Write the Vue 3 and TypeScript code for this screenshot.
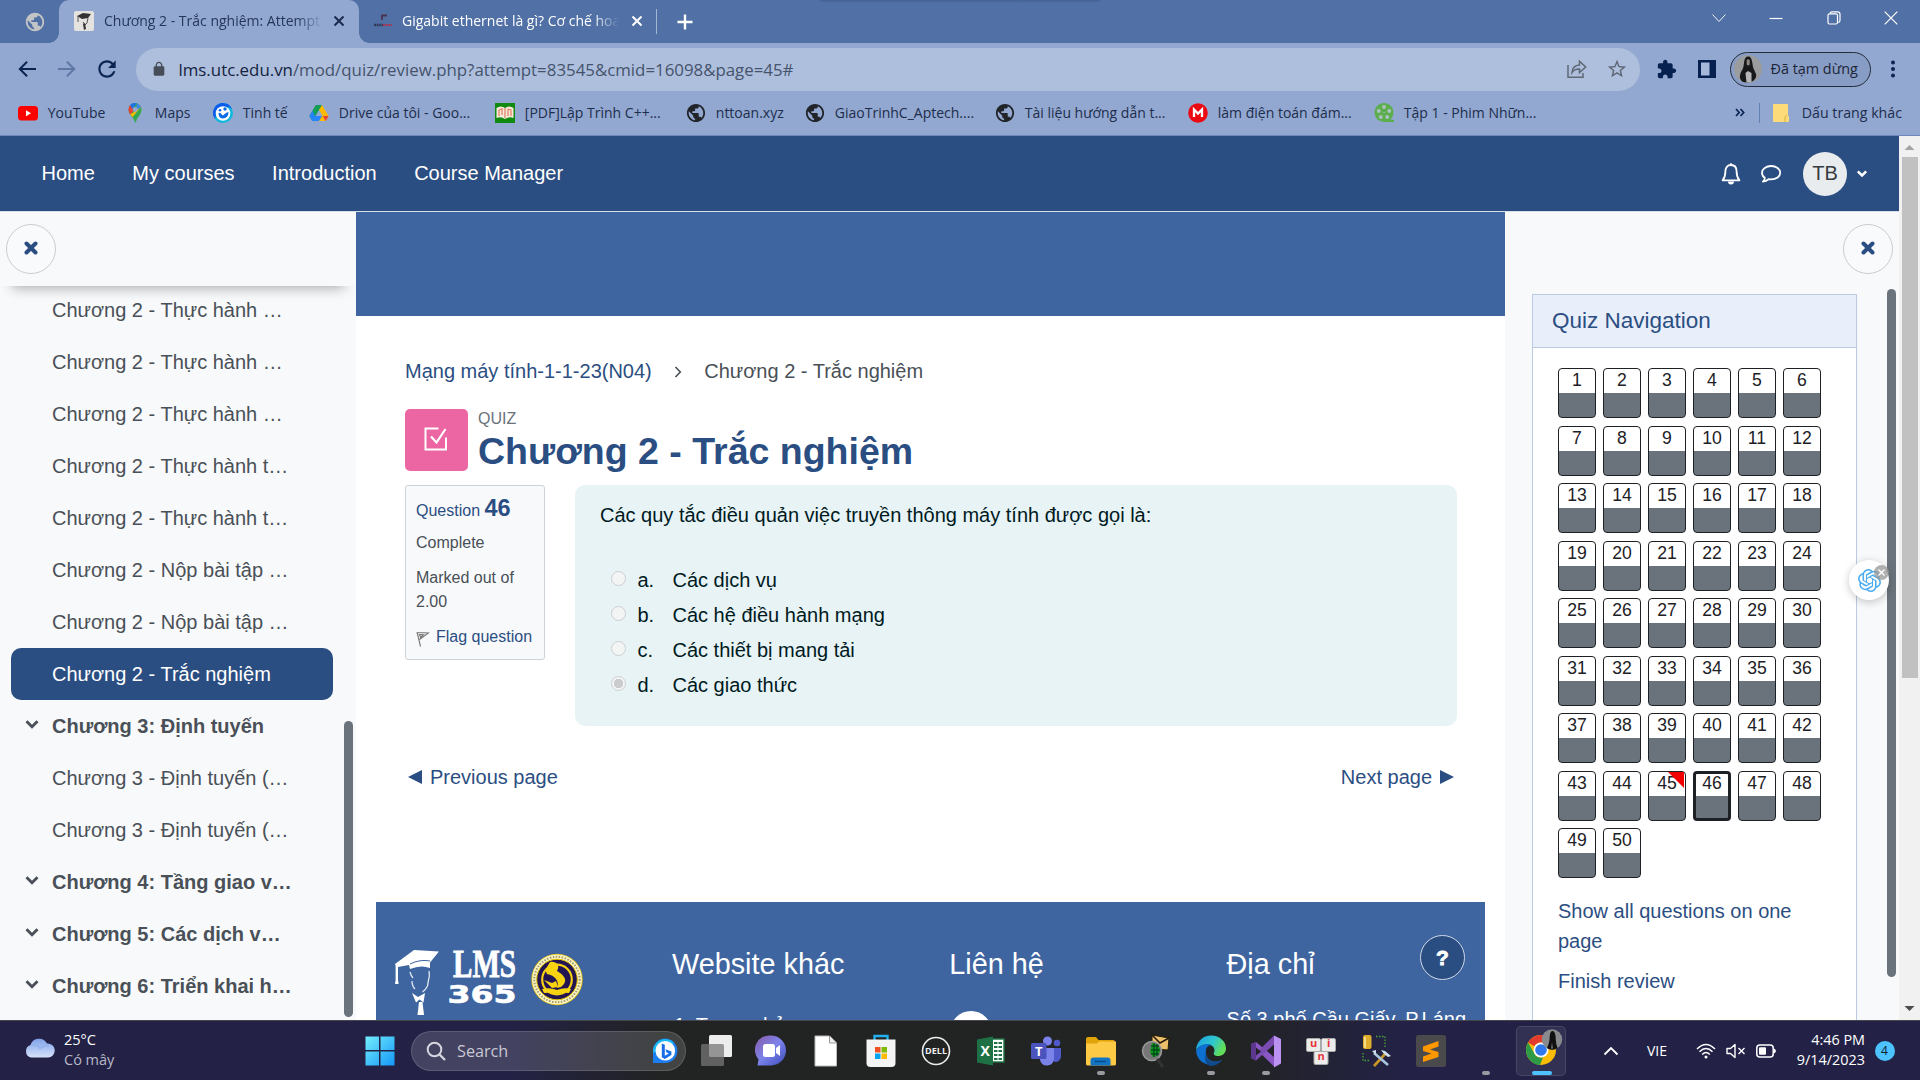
<script setup lang="ts">
interface Bookmark { icon: string; label: string; width: number }
interface CourseRow { label: string; section?: boolean; active?: boolean }

const bookmarks: Bookmark[] = [
  { icon: 'youtube', label: 'YouTube', width: 107 },
  { icon: 'maps', label: 'Maps', width: 88 },
  { icon: 'tinhte', label: 'Tinh tế', width: 96 },
  { icon: 'drive', label: 'Drive của tôi - Goo...', width: 186 },
  { icon: 'book', label: '[PDF]Lập Trình C++...', width: 191 },
  { icon: 'globe', label: 'nttoan.xyz', width: 119 },
  { icon: 'globe', label: 'GiaoTrinhC_Aptech....', width: 190 },
  { icon: 'globe', label: 'Tài liệu hướng dẫn t...', width: 193 },
  { icon: 'mega', label: 'làm điện toán đám...', width: 186 },
  { icon: 'film', label: 'Tập 1 - Phim Nhữn...', width: 180 },
]

const navLinks: string[] = ['Home', 'My courses', 'Introduction', 'Course Manager']

const courseIndex: CourseRow[] = [
  { label: 'Chương 2 - Thực hành …' },
  { label: 'Chương 2 - Thực hành …' },
  { label: 'Chương 2 - Thực hành …' },
  { label: 'Chương 2 - Thực hành t…' },
  { label: 'Chương 2 - Thực hành t…' },
  { label: 'Chương 2 - Nộp bài tập …' },
  { label: 'Chương 2 - Nộp bài tập …' },
  { label: 'Chương 2 - Trắc nghiệm', active: true },
  { label: 'Chương 3: Định tuyến', section: true },
  { label: 'Chương 3 - Định tuyến (…' },
  { label: 'Chương 3 - Định tuyến (…' },
  { label: 'Chương 4: Tầng giao v…', section: true },
  { label: 'Chương 5: Các dịch v…', section: true },
  { label: 'Chương 6: Triển khai h…', section: true },
]

const answers = [
  { key: 'a.', text: 'Các dịch vụ', checked: false },
  { key: 'b.', text: 'Các hệ điều hành mạng', checked: false },
  { key: 'c.', text: 'Các thiết bị mang tải', checked: false },
  { key: 'd.', text: 'Các giao thức', checked: true },
]

const questionCount = 50
const currentQuestion = 46
const flaggedQuestion = 45

const globePath = 'M12 2C6.48 2 2 6.48 2 12s4.48 10 10 10 10-4.48 10-10S17.52 2 12 2zm-1 17.93c-3.95-.49-7-3.85-7-7.93 0-.62.08-1.21.21-1.79L9 15v1c0 1.1.9 2 2 2v1.93zm6.9-2.54c-.26-.81-1-1.39-1.9-1.39h-1v-3c0-.55-.45-1-1-1H8v-2h2c.55 0 1-.45 1-1V7h2c1.1 0 2-.9 2-2v-.41c2.93 1.19 5 4.06 5 7.41 0 2.08-.8 3.97-2.1 5.39z'
</script>

<template>
  <div class="screen">
    <!-- Browser chrome -->
    <div class="tabstrip">
      <div class="pinned"><svg width="22" height="22" viewBox="0 0 24 24" fill="#c3c4c6"><path :d="globePath" /></svg></div>
      <div class="tab active-tab">
        <svg class="favicon" width="20" height="20" viewBox="0 0 20 20"><rect width="20" height="20" rx="2" fill="#e4e3df" /><path d="M3 5l6-3 8 1-3 4-6 1z" fill="#333" /><path d="M4 5v6M14 7l-1 5-2 2-2-3" stroke="#555" fill="none" /><path d="M9 13l2-1 1 6-2 1z" fill="#333" /></svg>
        <span class="tab-title">Chương 2 - Trắc nghiệm: Attempt review</span>
        <svg class="tab-x" width="12" height="12" viewBox="0 0 12 12"><path d="M1.5 1.5l9 9M10.500 1.500l-9 9" stroke="#1c2b4c" stroke-width="2" /></svg>
      </div>
      <div class="tab second-tab">
        <svg class="favicon" width="20" height="20" viewBox="0 0 20 20"><path d="M9 9V4.500h5" fill="none" stroke="#4a3550" stroke-width="1.800" /><path d="M1 14h9" stroke="#2f3a5c" stroke-width="2.500" stroke-dasharray="2 .6" /><path d="M10 14h9" stroke="#a8354d" stroke-width="2.200" stroke-dasharray="2 .7" /></svg>
        <span class="tab-title">Gigabit ethernet là gì? Cơ chế hoạt động</span>
        <svg class="tab-x" width="12" height="12" viewBox="0 0 12 12"><path d="M1.500 1.500l9 9M10.500 1.500l-9 9" stroke="#fff" stroke-width="2" /></svg>
      </div>
      <i class="tab-sep"></i>
      <svg class="plus" width="16" height="16" viewBox="0 0 16 16"><path d="M8 .5v15M.5 8h15" stroke="#fff" stroke-width="2.400" /></svg>
      <div class="window-controls">
        <svg width="14" height="14" viewBox="0 0 14 14" class="thin"><path d="M.5 3.500L7 10.500l6.500-7" /></svg>
        <svg width="14" height="14" viewBox="0 0 14 14"><path d="M.5 7.500h13" /></svg>
        <svg width="14" height="14" viewBox="0 0 14 14"><rect x="1" y="2.800" width="9.500" height="10.200" rx="1.500" /><path d="M3 2.500Q3.300.8 5 .8h5.500q2.500 0 2.500 2.500v6q0 2-1.800 2.200" /></svg>
        <svg width="14" height="14" viewBox="0 0 14 14"><path d="M.7.7l12.600 12.600M13.300.7L.7 13.300" /></svg>
      </div>
      <div class="top-shade"></div>
    </div>

    <div class="toolbar">
      <svg class="nav-ic" width="24" height="24" viewBox="0 0 24 24" fill="#0a2350"><path d="M21 11H7.200l5.600-5.590L11.400 4l-8 8 8 8 1.410-1.410L7.200 13H21v-2z" /></svg>
      <svg class="nav-ic" width="24" height="24" viewBox="0 0 24 24" fill="#5e77a5"><path d="M3 11h13.800l-5.600-5.590L12.600 4l8 8-8 8-1.410-1.410L16.800 13H3v-2z" /></svg>
      <svg class="nav-ic" width="26" height="26" viewBox="0 0 24 24" fill="#0a2350"><path d="M17.650 6.350C16.200 4.900 14.210 4 12 4c-4.420 0-7.990 3.580-7.990 8s3.570 8 7.990 8c3.730 0 6.840-2.550 7.730-6h-2.080c-.82 2.330-3.040 4-5.650 4-3.310 0-6-2.690-6-6s2.690-6 6-6c1.660 0 3.140.69 4.220 1.780L13 11h7V4l-2.350 2.350z" /></svg>
      <div class="omnibox">
        <svg width="16" height="16" viewBox="0 0 24 24" fill="#474d58"><path d="M18 8h-1V6c0-2.760-2.240-5-5-5S7 3.240 7 6v2H6c-1.100 0-2 .9-2 2v10c0 1.100.9 2 2 2h12c1.100 0 2-.9 2-2V10c0-1.100-.9-2-2-2zM9 8V6c0-1.660 1.340-3 3-3s3 1.340 3 3v2z" /></svg>
        <span class="url"><b>lms.utc.edu.vn</b>/mod/quiz/review.php?attempt=83545&amp;cmid=16098&amp;page=45#</span>
        <svg class="share" width="20" height="20" viewBox="0 0 20 20" fill="none" stroke="#5f6875" stroke-width="1.500"><path d="M1 6v12.200h15V14" /><path d="M5 13.500Q5.500 6.500 12.500 6V2.300l6.200 5.700-6.200 5.500V10Q7.500 9.800 5 13.500z" /></svg>
        <svg width="22" height="22" viewBox="0 0 24 24" fill="#5f6875"><path d="M22 9.240l-7.190-.62L12 2 9.190 8.630 2 9.240l5.460 4.730L5.820 21 12 17.270 18.180 21l-1.630-7.030L22 9.240zM12 15.400l-3.760 2.270 1-4.280-3.320-2.880 4.380-.38L12 6.100l1.710 4.040 4.380.38-3.320 2.880 1 4.280L12 15.400z" /></svg>
      </div>
      <svg class="puzzle" width="20" height="20" viewBox="1 0 23 23" fill="#062150"><path d="M20.500 11H19V7c0-1.100-.9-2-2-2h-4V3.500C13 2.120 11.880 1 10.500 1S8 2.120 8 3.500V5H4c-1.100 0-1.990.9-1.990 2v3.800H3.500c1.490 0 2.700 1.210 2.700 2.700s-1.210 2.700-2.700 2.700H2V20c0 1.100.9 2 2 2h3.800v-1.500c0-1.490 1.210-2.700 2.700-2.700 1.490 0 2.700 1.210 2.700 2.700V22H17c1.100 0 2-.9 2-2v-4h1.500c1.380 0 2.500-1.120 2.500-2.500S21.880 11 20.500 11z" /></svg>
      <svg class="panel" width="18" height="18" viewBox="0 0 18 18"><rect width="18" height="18" fill="#062150" /><rect x="3" y="2.500" width="8.500" height="13" fill="#a5b8dc" /></svg>
      <div class="profile">
        <svg width="28" height="28" viewBox="0 0 28 28"><circle cx="14" cy="14" r="14" fill="#9a9c9e" /><path d="M8.500 26.800c-3.500-3-3-6-1.500-9.800 2-3 2.500-5 3-9C10.500 3 12 1.500 14.300 1.500S18 4 18.500 9s2.500 7 3.500 10-1 6-3.500 7.300a14 14 0 0 1-10 .5z" fill="#17181a" /><path d="M12.700 5q1.600-1.500 3 0v4.500q-1.500 2-3 0z" fill="#8d8885" /><path d="M11.500 18l2.500-2 3.500 2v9.500h-5z" fill="#b6b6b8" /></svg>
        <span>Đã tạm dừng</span>
      </div>
      <svg class="dots" width="6" height="20" viewBox="0 0 6 20" fill="#0a2350"><circle cx="3" cy="3.500" r="2" /><circle cx="3" cy="10" r="2" /><circle cx="3" cy="16.500" r="2" /></svg>
    </div>

    <div class="bookmarks">
      <div v-for="b in bookmarks" :key="b.label" class="bookmark" :style="{ width: b.width + 'px' }">
        <svg v-if="b.icon === 'youtube'" width="20" height="20" viewBox="0 0 20 20"><rect y="3" width="20" height="14.500" rx="3.500" fill="#f00" /><path d="M8 7.300l5 3-5 3z" fill="#fff" /></svg>
        <svg v-else-if="b.icon === 'maps'" width="20" height="20" viewBox="0 0 20 20"><path d="M10 20C9.500 15 3.500 12 3.500 6.500A6.500 6.500 0 0 1 16.500 6.500C16.500 12 10.500 15 10 20z" fill="#34a853" /><path d="M3.500 6.500A6.500 6.500 0 0 1 5.300 2L10 6.500 5.200 11.600Q3.500 9 3.500 6.500z" fill="#ea4335" /><path d="M5.200 2.100A6.500 6.500 0 0 1 12 .4L7 6z" fill="#1a73e8" /><path d="M12 .4a6.500 6.500 0 0 1 4 3.900L11 9z" fill="#4285f4" /><path d="M5.200 11.600L16 4.200q1 3-.7 6L9 15.500z" fill="#fbbc04" /><path d="M15.700 4q1.600 4-1 8-3 3-4 8-1-4-3-6z" fill="#34a853" /><circle cx="10" cy="6.500" r="2.400" fill="#92a8d1" /></svg>
        <svg v-else-if="b.icon === 'tinhte'" width="20" height="20" viewBox="0 0 20 20"><path d="M10 0a10 10 0 0 1 0 20q-5 0-8-4Q-1 9 2 4q3-4 8-4z" fill="#11b6dc" /><path d="M10 0a10 10 0 0 1 9 6q-4-3-9-2-6 2-8 12A10 10 0 0 1 10 0z" fill="#0b5ce8" /><circle cx="10" cy="10.500" r="7.300" fill="#fff" /><circle cx="7" cy="7.200" r="1.300" fill="#0b6ce8" /><circle cx="12" cy="6" r="1.700" fill="#0b6ce8" /><path d="M5.500 10q1.500-1 3 1 .5 2 2 1 3-3 5-3 0 6-6 6.500-4-.5-4-5.500z" fill="#0b6ce8" /></svg>
        <svg v-else-if="b.icon === 'drive'" width="20" height="20" viewBox="0 0 20 20"><path d="M7 2h6L6.500 13l-3.200 5L.4 13z" fill="#0f9d58" /><path d="M7 2h6l6.600 11h-6z" fill="#ffba00" /><path d="M6.500 13h13.200l-3 5H3.300z" fill="#ffba00" /><path d="M3.800 7.500L10 18H3.300L.4 13z" fill="#2684fc" /><path d="M7 2h6L6 13.500 3.800 7.500z" fill="#0f9d58" /><path d="M10 7.200l3.400 5.800H6.600z" fill="#92a8d1" /><path d="M6.600 13H13l-3 5H3.300z" fill="#2684fc" /><path d="M13.700 13h6l-3 5z" fill="#ea4335" /></svg>
        <svg v-else-if="b.icon === 'book'" width="20" height="20" viewBox="0 0 20 20"><rect width="20" height="20" fill="#128a12" /><path d="M1.500 5Q6 2 10 5q4-3 8.500 0v10q-4-2-8.500 1-4-3-8.500-1z" fill="#f8e9da" /><path d="M10 5v10M4 7l3-1v6M4 7v6M13 6l3 1v6M13 6v7" fill="none" stroke="#e0876b" stroke-width="1.300" /></svg>
        <svg v-else-if="b.icon === 'mega'" width="20" height="20" viewBox="0 0 20 20"><circle cx="10" cy="10" r="9.800" fill="#ec0a12" /><path d="M6 14V6.500l4 4 4-4V14" fill="none" stroke="#fff" stroke-width="2.300" /></svg>
        <svg v-else-if="b.icon === 'film'" width="20" height="20" viewBox="0 0 20 20"><circle cx="10" cy="9.500" r="9.500" fill="#5cad4b" /><path d="M10 19h10.500v-2l-6-1z" fill="#5cad4b" /><g fill="#a9c1c0"><circle cx="10" cy="4" r="2" /><circle cx="4.800" cy="8" r="2" /><circle cx="15.200" cy="8" r="2" /><circle cx="6.800" cy="14" r="2" /><circle cx="13.200" cy="14" r="2" /><circle cx="10" cy="9.500" r=".8" /></g></svg>
        <svg v-else width="20" height="20" viewBox="1 1 22 22" fill="#212429"><path :d="globePath" /></svg>
        <span>{{ b.label }}</span>
      </div>
      <div class="bookmark-tail">
        <svg width="10" height="9" viewBox="0 0 10 9" fill="none" stroke="#0a2350" stroke-width="1.700"><path d="M1 1l3.200 3.500L1 8M5.500 1l3.200 3.500L5.500 8" /></svg>
        <i></i>
        <svg width="16" height="20" viewBox="0 0 16 20"><path d="M0 2q0-1 1-1h13q1 0 1 1v10l1 2v4q0 1-1 1H1q-1 0-1-1z" fill="#fddb78" /><path d="M12 19v-4q0-2 2-3" fill="none" stroke="#d9b03f" /></svg>
        <span>Dấu trang khác</span>
      </div>
    </div>

    <!-- Web page -->
    <div class="viewport">
      <div class="page">
        <nav class="navbar">
          <a v-for="l in navLinks" :key="l">{{ l }}</a>
          <div class="nav-right">
            <svg width="20" height="24" viewBox="0 0 20 24"><path d="M10 1.200v2M10 3c-4 0-5.600 3-5.600 6.500C4.400 14 3.500 16 1.600 18.400h16.800C16.500 16 15.600 14 15.600 9.500 15.600 6 14 3 10 3z" fill="none" stroke="#fff" stroke-width="1.800" stroke-linejoin="round" /><path d="M7 19.500h6a3 3 0 0 1-6 0z" fill="#fff" /></svg>
            <svg width="22" height="20" viewBox="0 0 22 20"><path d="M11.200 2c5 0 9 2.900 9 6.700s-4 6.700-9 6.700q-1.300 0-2.500-.2-2.400 2.200-5.800 2.500 1.700-1.500 2-3.700Q2 12 2 8.700C2 4.900 6.200 2 11.200 2z" fill="none" stroke="#fff" stroke-width="1.800" stroke-linejoin="round" /></svg>
            <span class="avatar">TB</span>
            <svg width="12" height="10" viewBox="0 0 12 10"><path d="M1.800 2.300L6 6.500l4.200-4.200" fill="none" stroke="#fff" stroke-width="2.500" /></svg>
          </div>
        </nav>

        <div class="columns">
          <aside class="drawer-left">
            <header><button class="round-close"><svg width="14" height="14" viewBox="0 0 14 14"><path d="M2.500 2.500l9 9M11.500 2.500l-9 9" stroke="#2b4e82" stroke-width="4" stroke-linecap="round" /></svg></button></header>
            <div class="index">
              <div v-for="(r, i) in courseIndex" :key="i" class="row" :class="{ section: r.section, current: r.active }">
                <span class="caret"><svg v-if="r.section" width="14" height="10" viewBox="0 0 14 10"><path d="M1.500 1.300L7 6.700l5.500-5.400" fill="none" stroke="#495057" stroke-width="2.900" /></svg></span>
                <span>{{ r.label }}</span>
              </div>
            </div>
            <i class="thumb left-thumb"></i>
          </aside>

          <main>
            <div class="banner"></div>
            <div class="content">
              <div class="crumbs">
                <a>Mạng máy tính-1-1-23(N04)</a>
                <svg width="8" height="12" viewBox="0 0 8 12"><path d="M1.500 1l4.800 5-4.800 5" fill="none" stroke="#495057" stroke-width="1.600" /></svg>
                <span>Chương 2 - Trắc nghiệm</span>
              </div>
              <div class="heading">
                <div class="quiz-icon"><svg width="26" height="26" viewBox="0 0 26 26" fill="none" stroke="#fff" stroke-width="2"><path d="M15.500 2.500H2.500v21h20.500V11.500" /><path d="M8 10.500l5.500 6L22.500 3" stroke-width="2.200" /></svg></div>
                <div>
                  <div class="kind">QUIZ</div>
                  <h1>Chương 2 - Trắc nghiệm</h1>
                </div>
              </div>
              <div class="question">
                <div class="info">
                  <div class="qno">Question <b>46</b></div>
                  <div class="state">Complete</div>
                  <div class="grade">Marked out of 2.00</div>
                  <div class="flag"><svg width="14" height="16" viewBox="0 0 14 16" fill="none" stroke="#777" stroke-width="1.100"><path d="M1 1l3.500 14.500M1 1.500l11.500.5-9 6.500M3.500 3.500l1 3 3-2.800z" /></svg><span>Flag question</span></div>
                </div>
                <div class="formulation">
                  <p>Các quy tắc điều quản việc truyền thông máy tính được gọi là:</p>
                  <div v-for="a in answers" :key="a.key" class="answer">
                    <i class="radio" :class="{ on: a.checked }"></i><span class="key">{{ a.key }}</span><span>{{ a.text }}</span>
                  </div>
                </div>
              </div>
              <div class="pager">
                <a><svg width="14" height="14" viewBox="0 0 14 14" fill="#2b4e82"><path d="M0 7l14-7v14z" /></svg>Previous page</a>
                <a>Next page<svg width="14" height="14" viewBox="0 0 14 14" fill="#2b4e82"><path d="M14 7L0 0v14z" /></svg></a>
              </div>
            </div>
            <footer>
              <div class="fcol brand">
                <svg width="192" height="72" viewBox="0 0 192 72">
                  <g fill="#fff"><path d="M0 21L19 7l25 1.500-9 11v5.500q-9-3.500-20 1l-1-4L3 24v14q1 2 .3 3H.3q-.6-1 .3-3V23z" /><path d="M17 50l6 4 7-4-1.500 9.500-4-3-3.500 3z" /><path d="M24 59h3.500l2 17-3.500 4-4-4z" /></g>
                  <path d="M15 21q10-5 20-3" stroke="#3e65a0" fill="none" />
                  <path d="M15 29q1 4 3 6M34 28q1 5-.5 9-.5 3-1 6-2 4-5 6M17 38q0 5 3 8" fill="none" stroke="#dfe8f4" stroke-width="1.300" />
                  <text x="58" y="34" class="lms" textLength="63" lengthAdjust="spacingAndGlyphs">LMS</text>
                  <text x="52.500" y="60" class="n365" textLength="69" lengthAdjust="spacingAndGlyphs">365</text>
                  <circle cx="162" cy="36.500" r="25.700" fill="#e2bd00" /><circle cx="162" cy="36.500" r="22.700" fill="none" stroke="#f9f3c8" stroke-width="4.500" /><circle cx="162" cy="36.500" r="22.700" fill="none" stroke="#a69b62" stroke-width="2" stroke-dasharray="1.500 1.500" /><circle cx="162" cy="36.500" r="20.300" fill="#231552" stroke="#e8c90c" stroke-width="1" /><circle cx="162" cy="36.500" r="14.800" fill="none" stroke="#f4cf12" stroke-width="2.200" />
                  <path d="M155 19q5-1 8 3 1 3-1 6 6 3 8 8 1 4-4 8l-4 1q2-5-1-9-3-4-9-5-3-3 3-12z" fill="#f7d312" /><path d="M149 37l8 3 4-2 2 6-6 1z" fill="#f7d312" /><path d="M147 46q8-2 15 1 7-3 14-1l-2 4q-6-1-12 1-6-2-13-1z" fill="#f7d312" />
                </svg>
              </div>
              <div class="fcol"><h3>Website khác</h3><p class="site">1. Trang chủ</p></div>
              <div class="fcol"><h3>Liên hệ</h3><i class="social"></i></div>
              <div class="fcol"><h3>Địa chỉ</h3><p>Số 3 phố Cầu Giấy, P.Láng</p></div>
              <button class="help">?</button>
            </footer>
          </main>

          <aside class="drawer-right">
            <header><button class="round-close"><svg width="14" height="14" viewBox="0 0 14 14"><path d="M2.500 2.500l9 9M11.500 2.500l-9 9" stroke="#2b4e82" stroke-width="4" stroke-linecap="round" /></svg></button></header>
            <section class="card">
              <h2>Quiz Navigation</h2>
              <div class="qgrid">
                <a v-for="n in questionCount" :key="n" class="qbtn" :class="{ here: n === currentQuestion, flagged: n === flaggedQuestion }">{{ n }}</a>
              </div>
              <a class="side-link">Show all questions on one page</a>
              <a class="side-link">Finish review</a>
            </section>
            <i class="thumb right-thumb"></i>
            <div class="assistant">
              <svg width="23" height="23" viewBox="0 0 24 24" fill="#4aabf0"><path d="M22.2819 9.8211a5.9847 5.9847 0 0 0-.5157-4.9108 6.0462 6.0462 0 0 0-6.5098-2.9A6.0651 6.0651 0 0 0 4.9807 4.1818a5.9847 5.9847 0 0 0-3.9977 2.9 6.0462 6.0462 0 0 0 .7427 7.0966 5.98 5.98 0 0 0 .511 4.9107 6.051 6.051 0 0 0 6.5146 2.9001A5.9847 5.9847 0 0 0 13.2599 24a6.0557 6.0557 0 0 0 5.7718-4.2058 5.9894 5.9894 0 0 0 3.9977-2.9001 6.0557 6.0557 0 0 0-.7475-7.0729zm-9.022 12.6081a4.4755 4.4755 0 0 1-2.8764-1.0408l.1419-.0804 4.7783-2.7582a.7948.7948 0 0 0 .3927-.6813v-6.7369l2.02 1.1686a.071.071 0 0 1 .038.052v5.5826a4.504 4.504 0 0 1-4.4945 4.4944zm-9.6607-4.1254a4.4708 4.4708 0 0 1-.5346-3.0137l.142.0852 4.783 2.7582a.7712.7712 0 0 0 .7806 0l5.8428-3.3685v2.3324a.0804.0804 0 0 1-.0332.0615L9.74 19.9502a4.4992 4.4992 0 0 1-6.1408-1.6464zM2.3408 7.8956a4.485 4.485 0 0 1 2.3655-1.9728V11.6a.7664.7664 0 0 0 .3879.6765l5.8144 3.3543-2.0201 1.1685a.0757.0757 0 0 1-.071 0l-4.8303-2.7865A4.504 4.504 0 0 1 2.3408 7.872zm16.5963 3.8558L13.1038 8.364 15.1192 7.2a.0757.0757 0 0 1 .071 0l4.8303 2.7913a4.4944 4.4944 0 0 1-.6765 8.1042v-5.6772a.79.79 0 0 0-.407-.667zm2.0107-3.0231l-.142-.0852-4.7735-2.7818a.7759.7759 0 0 0-.7854 0L9.409 9.2297V6.8974a.0662.0662 0 0 1 .0284-.0615l4.8303-2.7866a4.4992 4.4992 0 0 1 6.6802 4.66zM8.3065 12.863l-2.02-1.1638a.0804.0804 0 0 1-.038-.0567V6.0742a4.4992 4.4992 0 0 1 7.3757-3.4537l-.142.0805L8.704 5.459a.7948.7948 0 0 0-.3927.6813zm1.0976-2.3654l2.602-1.4998 2.6069 1.4998v2.9994l-2.5974 1.4997-2.6067-1.4997Z" /></svg>
              <span class="dismiss"><svg width="7" height="7" viewBox="0 0 7 7"><path d="M.5.5l6 6M6.500.5l-6 6" stroke="#fff" stroke-width="1.300" /></svg></span>
            </div>
          </aside>
        </div>
      </div>

      <div class="scrollbar">
        <svg width="21" height="21" viewBox="0 0 21 21"><path d="M5.500 14L10.500 9l5 5z" fill="#a3a3a3" /></svg>
        <div class="track"></div>
        <svg width="21" height="21" viewBox="0 0 21 21"><path d="M5.500 7L10.500 12l5-5z" fill="#4d4d4d" /></svg>
      </div>
    </div>

    <!-- Taskbar -->
    <div class="taskbar">
      <div class="weather">
        <svg width="32" height="22" viewBox="0 0 32 22"><defs><linearGradient id="cl" x1="0" y1="0" x2="0" y2="1"><stop offset="0" stop-color="#7fa3ea" /><stop offset="1" stop-color="#d6e2fa" /></linearGradient></defs><path d="M7 20.500a6.500 6.500 0 0 1-.5-12.500A9 9 0 0 1 23 6.500a7 7 0 0 1 1.500 14z" fill="url(#cl)" /><path d="M8 8.500q5-1.500 8 3 4-4 9-2.500" fill="none" stroke="#8fb0ee" stroke-width="1.300" /></svg>
        <div><div class="deg">25°C</div><div class="cond">Có mây</div></div>
      </div>
      <svg class="start" width="30" height="30" viewBox="0 0 30 30"><defs><linearGradient id="wg" x1="0" y1="0" x2="1" y2="1"><stop offset="0" stop-color="#74eefc" /><stop offset="1" stop-color="#1397f7" /></linearGradient></defs><path d="M.5.5H14V14H.5zM15.500.5H29.500V14H15.500zM.5 15.500H14V29.500H.5zM15.500 15.500H29.500V29.500H15.500z" fill="url(#wg)" /></svg>
      <div class="search">
        <svg width="20" height="20" viewBox="0 0 20 20" fill="none" stroke="#d6d5df" stroke-width="2"><circle cx="8.500" cy="8.500" r="6.800" /><path d="M13.500 13.500l5.500 5.500" stroke-width="2.400" /></svg>
        <span>Search</span>
        <svg class="bing" width="26" height="26" viewBox="0 0 26 26"><path d="M1 25V13A12.200 12.200 0 1 1 13 25z" fill="#1b7ff0" /><path d="M1 15A12.200 12.200 0 0 1 22 5z" fill="#19b7f3" /><circle cx="13.300" cy="12.700" r="9.800" fill="#fff" /><path d="M9.800 5.500l3 1.200v11l4-2.300-2.400-1.200-1-3 6 2.200v3.500l-6.500 4-3.100-1.700z" fill="#176de8" /></svg>
      </div>

      <div class="slot"><svg width="32" height="32" viewBox="0 0 32 32"><rect x="9" y="0" width="23" height="22" rx="1.500" fill="#ededed" /><rect x="1" y="9" width="23" height="22" rx="1.500" fill="#777" fill-opacity=".75" /></svg></div>
      <div class="slot"><svg width="32" height="34" viewBox="0 0 32 34"><defs><linearGradient id="mg" x1="0" y1="0" x2="1" y2="1"><stop offset="0" stop-color="#8a5aa8" /><stop offset=".5" stop-color="#7b83eb" /><stop offset="1" stop-color="#3d4ab8" /></linearGradient></defs><path d="M16 1.500a14 14 0 0 1 0 30H2.500l1-6A14.500 14.500 0 0 1 16 1.500z" fill="url(#mg)" /><rect x="8" y="10" width="12" height="13" rx="2.500" fill="#fff" /><path d="M21 14l4-3v11l-4-3z" fill="#fff" /></svg></div>
      <div class="slot"><svg width="24" height="32" viewBox="0 0 24 32"><path d="M1 1h14.500l7 7v23H1z" fill="#fff" stroke="#bbb" /><path d="M15.500 1v7h7" fill="#eee" stroke="#999" /></svg></div>
      <div class="slot"><svg width="32" height="34" viewBox="0 0 32 34"><path d="M9.500 7V2h13v5" fill="none" stroke="#22b0f0" stroke-width="2.400" /><path d="M1.500 5.500h29V29q0 4-4 4h-21q-4 0-4-4z" fill="#f4f4f4" /><path fill="#f25022" d="M10 13h5.500v5.500H10z" /><path fill="#7fba00" d="M16.500 13H22v5.500h-5.500z" /><path fill="#00a4ef" d="M10 19.500h5.500V25H10z" /><path fill="#ffb900" d="M16.500 19.500H22V25h-5.500z" /></svg></div>
      <div class="slot"><svg width="30" height="30" viewBox="0 0 30 30"><circle cx="15" cy="15" r="13.500" fill="none" stroke="#eee" stroke-width="1.600" /><text x="4" y="18.200" class="dell" textLength="22" lengthAdjust="spacingAndGlyphs">DELL</text></svg></div>
      <div class="slot"><svg width="30" height="32" viewBox="0 0 30 32"><rect x="14" y="4" width="14" height="23" fill="#fff" stroke="#217346" stroke-width="1.500" /><path d="M18 8h8M18 12h8M18 16h8M18 20h8M18 24h8" stroke="#217346" stroke-width="2.200" /><path d="M22 6v20" stroke="#fff" /><path d="M1 4.500L17 1.500v29L1 27.500z" fill="#1d7145" /><text x="4.500" y="21" class="glyph">X</text></svg></div>
      <div class="slot"><svg width="32" height="32" viewBox="0 0 32 32"><circle cx="17.500" cy="6" r="4.500" fill="#7b83eb" /><circle cx="27" cy="8" r="3.300" fill="#5059c9" /><path d="M22 13h9v9q-1 5-6 5l-4-2z" fill="#5059c9" /><path d="M10 13h14v11q-1 6.500-7 6.500t-7-6z" fill="#7b83eb" /><rect x="1" y="8" width="15.500" height="16" rx="1.500" fill="#4b53bc" /><text x="5" y="20.500" class="glyph tee">T</text></svg></div>
      <div class="slot running"><svg width="32" height="32" viewBox="0 0 32 32"><path d="M1 4q0-2 2-2h8l2.500 3H28q2 0 2 2v8H1z" fill="#e0a30a" /><path d="M1 8.500h11l2-2h17V29q0 1.500-2 1.500H3Q1 30.500 1 29z" fill="#fdca45" /><path d="M5.500 30.500v-5q0-3 3-3h14q3 0 3 3v5z" fill="#1275c4" /><path d="M10 26.500h11" stroke="#0a4c86" stroke-width="1.500" /></svg></div>
      <div class="slot"><svg width="32" height="34" viewBox="0 0 32 34"><path d="M12 1l17 3-1 12-16-1z" fill="#ecc06b" stroke="#221a0a" /><path d="M12 1l8 8 9-5" fill="none" stroke="#221a0a" stroke-width="1.500" /><circle cx="12" cy="17" r="9.500" fill="#777" stroke="#999" stroke-width="1.500" /><path d="M12 9q6 0 8 6 0 7-7 8l-3-5z" fill="#0a9a17" /><path d="M11 12h8M11 16h9M11 20h8M14 9v14M17 10v12" stroke="#032" /><path d="M17 25l6 8" stroke="#333" stroke-width="3" /></svg></div>
      <div class="slot running"><svg width="32" height="34" viewBox="0 0 32 34"><defs><linearGradient id="eg" x1="0" y1="0" x2="1" y2=".4"><stop offset="0" stop-color="#1a9be0" /><stop offset=".6" stop-color="#2fc6cf" /><stop offset="1" stop-color="#62dd58" /></linearGradient></defs><path d="M1 16A15 15 0 0 1 16 1.500c9 0 15 6 15 13 0 5-4 7.500-8 7.500-3 0-5-1.500-4-3.500Q20 17 19 14c-2-5-13-5-18 2z" fill="url(#eg)" /><path d="M1 17C4 10 13 9 17 11c-5 0-7 4-6 9 1 6 7 10 16 6A15 15 0 0 1 1 17z" fill="#0d6fcf" /><path d="M11 19c0 8 7 11 16 7-3 4-7 6-12 6-5-2-6-9-4-13z" fill="#114a8b" /></svg></div>
      <div class="slot running"><svg width="32" height="34" viewBox="0 0 32 34"><path d="M1 10l5-2 18 15v9.500z" fill="#8a57c4" /><path d="M1 24l5 2.500L24 10.500V1.500z" fill="#7b4db3" /><path d="M6 13.500l5 4-5 4z" fill="#222227" /><path d="M24 1.500l7 3.500v24.500l-7 4z" fill="#bb91f2" /><path d="M1 10v14l5 2.500V8z" fill="#5b3790" /></svg></div>
      <div class="slot"><svg width="32" height="32" viewBox="0 0 32 32"><g fill="#ececec" stroke="#aaa"><rect x="1.500" y="3.500" width="14" height="13" rx="1.500" /><rect x="16.500" y="3.500" width="14" height="13" rx="1.500" /><rect x="9" y="16.500" width="14" height="13" rx="1.500" /></g><text x="5" y="12" class="key-cap">u</text><text x="22" y="12" class="key-cap">i</text><text x="12.500" y="25" class="key-cap">n</text></svg></div>
      <div class="slot"><svg width="32" height="34" viewBox="0 0 32 34"><rect x="3" y="1" width="8.500" height="14" rx="2" fill="#dfae2c" /><path d="M5 3v11" stroke="#fbe49b" stroke-width="1.600" /><path d="M16 2.500h9v11M3 19v7.500h7" fill="none" stroke="#4ba33a" stroke-width="1.300" stroke-dasharray="1.500 1.500" /><path d="M14 32l12-13" stroke="#c99526" stroke-width="2.600" /><path d="M14 19l14 12" stroke="#a9c6dd" stroke-width="2.600" /><path d="M12 17l4-1v5zM21 16l4 1 6 5-3 1-4-3z" fill="#cfe0ec" /></svg></div>
      <div class="slot"><svg width="30" height="32" viewBox="0 0 30 32"><rect width="30" height="32" rx="2.500" fill="#4a4a4c" /><path d="M7 11.500L22.500 6v5.500L14 14.500l8.500 2.500v5L7 27v-5.500l8.500-3L7 16z" fill="#ff9800" /></svg></div>
      <div class="slot running"></div>
      <div class="slot chrome-slot">
        <svg width="40" height="40" viewBox="0 0 40 40"><circle cx="17" cy="22" r="15" fill="#fbbc05" /><path d="M17 7A15 15 0 0 1 30 14.500H17a7.500 7.500 0 0 0-6.500 3.700L4 14.500A15 15 0 0 1 17 7z" fill="#e33b2e" /><path d="M4 14.500l6.500 11.200a7.500 7.500 0 0 0 8.500 3.500L16 37A15 15 0 0 1 4 14.500z" fill="#2c9a46" /><circle cx="17" cy="22" r="7.500" fill="#fff" /><circle cx="17" cy="22" r="5.800" fill="#2f78ee" /><circle cx="28" cy="11.500" r="10.200" fill="#898a8d" /><path d="M23 20q2-4 2.500-8 0-9 3-9t3.200 8q.3 5 1.800 9-2.500 2-5.500 1.700-3 0-5-1.700z" fill="#111" /><path d="M28 14.500l1 6h-2z" fill="#777" /></svg>
      </div>

      <div class="tray">
        <svg class="up" width="16" height="10" viewBox="0 0 16 10"><path d="M1.500 8.500L8 2l6.500 6.500" fill="none" stroke="#fff" stroke-width="1.800" /></svg>
        <span class="lang">VIE</span>
        <svg class="wifi" width="20" height="16" viewBox="0 0 20 16" fill="none" stroke="#fff" stroke-width="1.500"><path d="M1 6q9-9 18 0M3.500 8.800q6.500-6.500 13 0M6.200 11.500q3.800-3.800 7.600 0" /><circle cx="10" cy="14" r="1.500" fill="#fff" stroke="none" /></svg>
        <svg class="vol" width="20" height="16" viewBox="0 0 20 16" fill="none" stroke="#fff" stroke-width="1.400"><path d="M1 5.500h3.500L9 1.500v13l-4.500-4H1z" stroke-linejoin="round" /><path d="M12.500 5l6 6M18.500 5l-6 6" /></svg>
        <svg class="bat" width="20" height="14" viewBox="0 0 20 14"><rect x=".8" y="1" width="16.400" height="12" rx="3" fill="none" stroke="#fff" stroke-width="1.500" /><rect x="3" y="3.200" width="7" height="7.600" rx="1" fill="#fff" /><path d="M18 4.500v5l1.800-1.500v-2z" fill="#fff" /></svg>
        <div class="clock"><div>4:46 PM</div><div>9/14/2023</div></div>
        <span class="badge">4</span>
      </div>
    </div>
  </div>
</template>

<style>
html, body { margin: 0; overflow: hidden; }
</style>

<style scoped>
* { box-sizing: border-box; }
svg { display: block; flex: none; }
button { padding: 0; font: inherit; }
.screen { width: 1920px; height: 1080px; display: flex; flex-direction: column; overflow: hidden; font-family: "Liberation Sans", Arial, sans-serif; font-size: 20px; }

.tabstrip { height: 43px; flex: none; background: #5170a5; display: flex; position: relative; align-items: center; font-family: "Open Sans", "Noto Sans", sans-serif; font-size: 14px; }
.pinned { width: 59px; padding-left: 24px; }
.tab { width: 300px; height: 43px; display: flex; align-items: center; padding: 0 0 1px 15px; }
.active-tab { background: #92a8d1; border-radius: 10px 10px 0 0; color: #25375a; position: relative; }
.active-tab::before, .active-tab::after { content: ""; position: absolute; bottom: 0; width: 10px; height: 10px; }
.active-tab::before { left: -10px; background: radial-gradient(circle at 0 0, transparent 9.5px, #92a8d1 10px); }
.active-tab::after { right: -10px; background: radial-gradient(circle at 100% 0, transparent 9.5px, #92a8d1 10px); }
.tab-title { width: 219px; margin-left: 10px; margin-top: -2px; white-space: nowrap; overflow: hidden; mask-image: linear-gradient(90deg, #000 88%, transparent 100%); }
.tab-x { margin-left: 10px; }
.second-tab { width: 297px; color: #fff; padding-left: 14px; }
.second-tab .tab-title { margin-left: 9px; width: 217px; }
.second-tab .tab-x { margin-left: 12px; }
.tab-sep { width: 1px; height: 25px; background: #a3b5d4; }
.plus { margin-left: 20px; }
.window-controls { margin-left: auto; margin-right: 22px; margin-bottom: 7px; display: flex; gap: 43.500px; }
.window-controls svg { fill: none; stroke: #fff; stroke-width: 1.200; }
.window-controls .thin { stroke-width: .9; }
.top-shade { position: absolute; left: 820px; top: 0; width: 280px; height: 3px; background: linear-gradient(rgba(40, 60, 100, .28), transparent); border-radius: 0 0 40px 40px; }

.toolbar { height: 52px; flex: none; background: #92a8d1; display: flex; align-items: center; padding: 0 0 0 15px; font-family: "Open Sans", "Noto Sans", sans-serif; }
.nav-ic { margin-right: 15.500px; }
.omnibox { width: 1504px; height: 43px; margin-left: 0; border-radius: 22px; background: #aebfdd; display: flex; align-items: center; padding: 0 12px 0 15px; }
.url { flex: 1; margin-left: 12px; font-size: 16.850px; color: #45536c; }
.url b { font-weight: 400; color: #14233f; }
.share { margin-right: 19px; }
.puzzle { margin-left: 17px; }
.panel { margin-left: 21px; }
.profile { width: 141px; height: 35px; margin-left: 14px; border: 1.500px solid #252b38; border-radius: 18px; background: #889dc6; display: flex; align-items: center; padding-left: 3px; font-size: 14.400px; color: #1c2536; }
.profile span { margin-left: 9px; white-space: nowrap; margin-top: -1px; }
.dots { margin-left: 19px; }

.bookmarks { height: 41px; flex: none; background: #92a8d1; border-bottom: 1px solid #6d88b8; display: flex; align-items: center; padding: 0 18px 5px 18px; font-family: "Open Sans", "Noto Sans", sans-serif; font-size: 14px; color: #1d2d4c; }
.bookmark { display: flex; align-items: center; gap: 9.800px; white-space: nowrap; flex: none; }
.bookmark span, .bookmark-tail span { margin-top: -1px; }
.bookmark-tail { margin-left: auto; display: flex; align-items: center; white-space: nowrap; font-size: 14.200px; }
.bookmark-tail i { width: 1px; height: 20px; background: #6280b5; margin: 0 13px 0 14px; }
.bookmark-tail span { margin-left: 13px; }

.viewport { height: 884px; flex: none; display: flex; }
.page { width: 1899px; height: 884px; overflow: hidden; background: #fff; }
.navbar { height: 76px; background: #2b4e82; border-bottom: 1px solid #d9dfe9; display: flex; align-items: center; padding-left: 41.500px; gap: 37.500px; color: #fff; }
.nav-right { margin-left: auto; display: flex; align-items: center; padding-right: 31px; }
.nav-right svg + svg { margin-left: 19px; }
.avatar { width: 44px; height: 44px; border-radius: 50%; background: #e9ecef; color: #343a40; display: grid; place-items: center; margin: 0 9px 0 21.500px; }
.columns { display: flex; height: 808px; }

.drawer-left { width: 356px; background: #f8f9fb; position: relative; flex: none; overflow: hidden; }
.drawer-left header { height: 74px; padding: 12px 0 0 6px; background: #f8f9fb; position: relative; z-index: 1; box-shadow: 0 14px 12px -12px rgba(0, 0, 0, .32); }
.round-close { width: 50px; height: 50px; border: 1px solid #c9ccd0; border-radius: 50%; background: #f9fafc; display: grid; place-items: center; padding-bottom: 3px; }
.index { margin-top: -2px; padding-left: 11px; }
.row { height: 52px; width: 322px; display: flex; align-items: center; color: #495057; border-radius: 10px; white-space: nowrap; }
.caret { width: 41px; padding-left: 14px; }
.caret svg { margin-top: -2px; }
.section { font-weight: 700; }
.current { background: #2b4e82; color: #fff; }
.thumb { position: absolute; width: 9px; background: #6a737b; border-radius: 5px; }
.left-thumb { left: 344px; top: 509px; height: 296px; }

main { width: 1149px; flex: none; background: #fff; }
.banner { height: 104px; background: #3e65a0; }
.content { padding: 40px 48px 0 49px; }
.crumbs { height: 30px; display: flex; align-items: center; color: #495057; }
.crumbs svg { margin: 2px 22.500px 0 22px; }
a { color: #2b4e82; }
.navbar a { color: #fff; }
.heading { margin-top: 23px; height: 62px; display: flex; gap: 10px; }
.quiz-icon { width: 63px; height: 62px; background: #eb66a2; border-radius: 5px; display: grid; place-items: center; padding: 0 2px 2px 0; }
.kind { font-size: 16px; line-height: 20px; color: #6a737b; }
h1 { margin: 0; font-size: 37.500px; line-height: 45px; color: #2b4e82; white-space: nowrap; }
.question { margin-top: 14px; display: flex; gap: 30px; height: 241px; }
.info { width: 140px; height: 175px; border: 1px solid #ced3da; border-radius: 3px; background: #f8f9fb; padding: 8px 10px; font-size: 16px; line-height: 24px; color: #495057; }
.qno { color: #2b4e82; height: 31px; line-height: 28px; }
.qno b { font-size: 23.500px; }
.state { margin-top: 6px; }
.grade { margin-top: 11px; }
.flag { margin-top: 11px; display: flex; align-items: center; gap: 6px; color: #2b4e82; white-space: nowrap; }
.flag svg { margin-top: 4px; }
.formulation { flex: 1; background: #e7f3f5; border-radius: 10px; padding: 15px 25px; color: #001a1e; }
.formulation p { margin: 0 0 33px; line-height: 30px; }
.answer { height: 35px; display: flex; align-items: center; padding-left: 11px; }
.radio { width: 15px; height: 15px; border: 1px solid #cbcfd0; border-radius: 50%; background: #f3f5f5; margin: 0 11.500px 4px 0; }
.radio.on { background: radial-gradient(circle, #cacccd 0 4.500px, #f3f5f5 5px); }
.key { width: 35px; }
.pager { margin-top: 36px; height: 30px; display: flex; justify-content: space-between; align-items: center; padding: 0 3px; }
.pager a { display: flex; align-items: center; gap: 8px; }

footer { margin: 110px 20px 0; height: 118px; background: #3e65a0; color: #fff; display: flex; overflow: hidden; position: relative; }
.fcol { width: 277.300px; flex: none; padding: 45px 0 0 18.700px; white-space: nowrap; }
.brand { padding: 41px 0 0 19px; }
.lms { font-family: "Liberation Serif", serif; font-weight: 700; font-size: 40px; fill: #fff; stroke: #fff; stroke-width: .8; }
.n365 { font-family: "DejaVu Sans", sans-serif; font-weight: 700; font-size: 25px; fill: #fff; stroke: #fff; stroke-width: .6; }
h3 { margin: 0; font-weight: 400; font-size: 28.800px; line-height: 35px; }
.fcol p { margin: 22px 0 0; line-height: 30px; }
.fcol p.site { margin-top: 28px; padding-left: 2px; }
.social { display: block; width: 42px; height: 42px; border-radius: 50%; background: #fff; margin: 29px 0 0 1px; }
.help { position: absolute; left: 1044px; top: 33px; width: 45px; height: 45px; border-radius: 50%; border: 1px solid #cfd8e6; background: #2b4e82; color: #fff; font-weight: 700; font-size: 21px; -webkit-text-stroke: .8px #fff; }

.drawer-right { width: 394px; background: #f8f9fb; position: relative; flex: none; }
.drawer-right header { height: 82px; padding: 12px 6px 0 0; display: flex; justify-content: flex-end; }
.card { margin-left: 27px; width: 325px; height: 740px; border: 1px solid #bccae0; background: #fff; }
h2 { margin: 0; height: 53px; border-bottom: 1px solid #bccae0; background: #e8effb; color: #2b4e82; font-size: 22.500px; font-weight: 400; line-height: 52px; padding-left: 19px; }
.qgrid { display: grid; grid-template-columns: repeat(6, 38px); gap: 7.500px 7px; padding: 20px 0 0 25px; margin-bottom: 18px; }
.qbtn { height: 50px; border: 1px solid #1d2125; border-radius: 4px; background: linear-gradient(#fff 50%, #6a737b 50%); color: #1d2125; font-size: 17.600px; line-height: 22px; text-align: center; position: relative; }
.here { border-width: 3px; line-height: 18px; }
.flagged::after { content: ""; position: absolute; right: 1px; top: 0; border-top: 16px solid #f00000; border-left: 16px solid transparent; }
.side-link { display: block; margin-left: 25px; width: 260px; line-height: 30px; }
.side-link + .side-link { margin-top: 10px; }
.right-thumb { left: 382px; top: 77px; height: 688px; }
.assistant { position: absolute; left: 344px; top: 348px; width: 40px; height: 40px; border-radius: 50%; background: #fff; box-shadow: 0 2px 8px rgba(0, 0, 0, .22); display: grid; place-items: center; }
.dismiss { position: absolute; right: 0; top: 5px; width: 15px; height: 15px; border-radius: 50%; background: rgba(150, 150, 150, .75); display: grid; place-items: center; }

.scrollbar { width: 21px; background: #f1f1f1; display: flex; flex-direction: column; }
.track { flex: 1; padding: 0 2px 0 3px; }
.track::before { content: ""; display: block; height: 521px; background: #c1c1c1; }

.taskbar { height: 60px; flex: none; border-top: 1px solid #47464f; background: linear-gradient(90deg, #232246 0, #232246 510px, #222323 660px, #222323 1240px, #232246 1400px, #232246); display: flex; align-items: center; color: #fff; font-family: "Open Sans", "Noto Sans", sans-serif; }
.weather { width: 365px; padding-left: 24px; display: flex; align-items: center; gap: 8px; font-size: 14.500px; line-height: 20px; }
.weather svg { margin-top: -6px; }
.weather > div { margin-top: -2px; }
.cond { color: #b9b8c8; }
.search { width: 275px; height: 40px; margin-left: 16px; border: 1px solid rgba(255, 255, 255, .14); border-radius: 20px; background: rgba(255, 255, 255, .15); display: flex; align-items: center; padding: 0 7px 0 14px; font-size: 16.200px; color: #c9c8d4; }
.search span { flex: 1; margin-left: 11px; }
.slot { width: 55px; height: 60px; display: grid; place-items: center; flex: none; position: relative; }
.search + .slot { margin-left: 2px; }
.running::after { content: ""; position: absolute; left: 23.500px; bottom: 6px; width: 8px; height: 4px; border-radius: 2px; background: #9a9aa2; }
.dell { font-size: 9px; font-weight: 700; fill: #eee; }
.glyph { font-size: 14px; font-weight: 700; fill: #fff; }
.tee { font-size: 13px; }
.key-cap { font-size: 11px; font-weight: 700; fill: #e8353b; }
.chrome-slot { width: 50px; height: 50px; margin-left: 2.500px; border: 1px solid rgba(255, 255, 255, .1); border-radius: 5px; background: rgba(255, 255, 255, .07); padding: 0 0 5px 6px; }
.chrome-slot::after { content: ""; position: absolute; left: 15px; bottom: 0; width: 20px; height: 4px; border-radius: 2px; background: #4cc2ff; }
.tray { flex: 1; display: flex; align-items: center; font-size: 14px; line-height: 20px; }
.up { margin-left: 37.500px; }
.lang { width: 22px; margin-left: 28px; }
.wifi { margin-left: 27px; }
.vol { margin-left: 10px; }
.bat { margin-left: 10px; }
.clock { width: 89px; text-align: right; font-size: 14.400px; margin-top: -2px; }
.badge { width: 20px; height: 20px; margin-left: 9.500px; border-radius: 50%; background: #4cc2ff; color: #10202c; font-size: 12px; text-align: center; line-height: 20px; }
</style>
